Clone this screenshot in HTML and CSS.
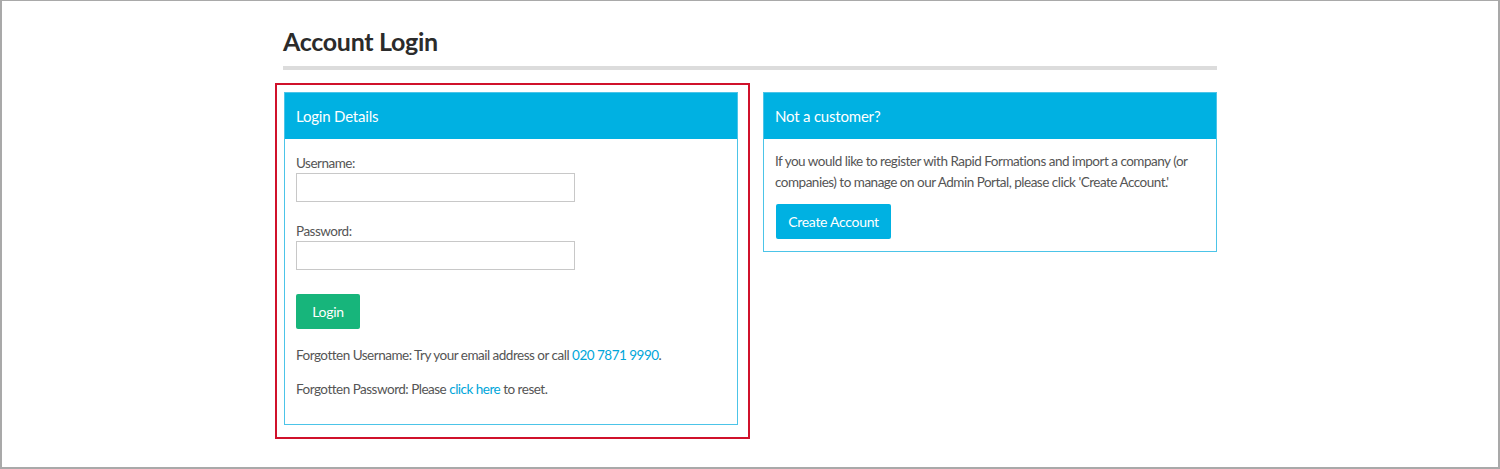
FILE: index.html
```html
<!DOCTYPE html>
<html lang="en">
<head>
  <meta charset="UTF-8">
  <title>Account Login</title>
  <link rel="stylesheet" href="styles.css">
</head>
<body>
  <div class="frame">
    <div class="page">
      <h1>Account Login</h1>

      <div class="row">
        <div class="highlight">
          <div class="panel">
            <div class="panel-head">Login Details</div>
            <div class="panel-body login-body">
              <label for="username">Username:</label>
              <input id="username" type="text">
              <label for="password" class="second">Password:</label>
              <input id="password" type="password">
              <button class="btn btn-green">Login</button>
              <p class="note first">Forgotten Username: Try your email address or call <a href="#">020 7871 9990</a>.</p>
              <p class="note">Forgotten Password: Please <a href="#">click here</a> to reset.</p>
            </div>
          </div>
        </div>

        <div class="panel side">
          <div class="panel-head">Not a customer?</div>
          <div class="panel-body side-body">
            <p>If you would like to register with Rapid Formations and import a company (or companies) to manage on our Admin Portal, please click 'Create Account.'</p>
            <button class="btn btn-blue">Create Account</button>
          </div>
        </div>
      </div>
    </div>
  </div>
</body>
</html>
```

FILE: styles.css
```css
body {
  margin: 0;
  font-family: Lato, 'Open Sans', sans-serif;
  color: #555;
  background: #fff;
}

.frame {
  box-sizing: border-box;
  height: 469px;
  border: 2px solid #a9a9a9;
  border-top-width: 1px;
}

.page {
  width: 934px;
  margin: 0 auto;
}

h1 {
  margin: 0;
  padding: 24px 0 9px;
  font-size: 25px;
  line-height: 32px;
  font-weight: bold;
  letter-spacing: -0.3px;
  color: #2b2b2b;
  border-bottom: 4px solid #dcdcdc;
}

.row {
  display: flex;
  align-items: flex-start;
  margin-top: 13px;
}

.highlight {
  margin-left: -8px;
  padding: 7px 10px 12px 7px;
  border: 2px solid #d0112b;
}

.panel {
  width: 452px;
  border: 1px solid #4cc4e8;
}

.side {
  margin-left: 13px;
  margin-top: 9px;
  width: 452px;
}

.panel-head {
  height: 46px;
  line-height: 46px;
  padding: 0 11px;
  background: #00b1e2;
  color: #fff;
  font-size: 15px;
  letter-spacing: -0.2px;
}

.panel-body {
  padding: 0 11px;
  font-size: 13.5px;
  letter-spacing: -0.5px;
}

.login-body {
  padding-top: 14px;
  padding-bottom: 25px;
}

label {
  display: block;
  line-height: 20px;
}

label.second {
  margin-top: 19px;
}

input {
  display: block;
  box-sizing: border-box;
  width: 279px;
  height: 29px;
  margin: 0;
  border: 1px solid #c8c8c8;
}

.btn {
  border: none;
  border-radius: 2px;
  color: #fff;
  font-family: inherit;
  font-size: 14px;
  letter-spacing: -0.3px;
  height: 35px;
  padding: 0;
  cursor: pointer;
}

.btn-green {
  margin-top: 24px;
  background: #17b57b;
  width: 64px;
}

.btn-blue {
  background: #00b1e2;
  width: 115px;
  margin-left: 1px;
}

.note {
  margin: 14px 0 0;
  line-height: 20px;
}

.note.first {
  margin-top: 16px;
}

a {
  color: #00a6da;
  text-decoration: none;
}

.side-body {
  padding-top: 12px;
  padding-bottom: 12px;
}

.side-body p {
  margin: 0 0 11px;
  line-height: 21px;
}
```
